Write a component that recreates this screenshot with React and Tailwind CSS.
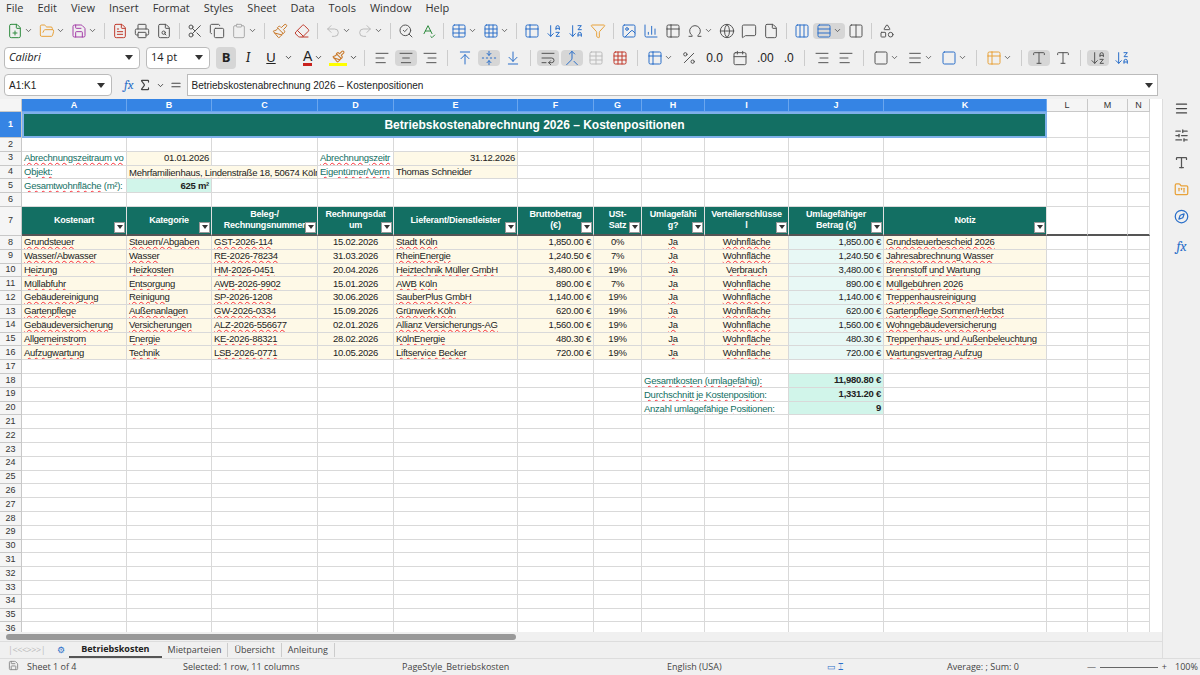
import React from "react";
import {
  FilePlus, FolderOpen, Save, FileText, Printer, FileSearch, Scissors, Copy, Clipboard, Paintbrush, Eraser,
  Undo2, Redo2, SearchCheck, SpellCheck, Table, Grid3x3, ArrowDownAZ, ArrowDownZA, Filter, Image, BarChart3,
  Table2, Omega, Globe, MessageSquare, File, Columns3, Rows3, Shapes, ChevronDown, AlignLeft, AlignCenter,
  AlignRight, ArrowUpToLine, FoldVertical, ArrowDownToLine, WrapText, Merge, Percent, Calendar, Menu,
  SlidersHorizontal, Type, FolderKanban, Compass, Sigma, Equal, Square, Columns2,
} from "lucide-react";

const F = { fontFamily: "'Open Sans','Liberation Sans',sans-serif" };
const C = { fontFamily: "'Liberation Sans',Arial,sans-serif" };
const T = "text-[9.5px] tracking-[-0.25px]";

const cols = [
  ["A", 105], ["B", 85], ["C", 106], ["D", 76], ["E", 124], ["F", 76], ["G", 48],
  ["H", 63], ["I", 84], ["J", 95], ["K", 163], ["L", 41], ["M", 40], ["N", 22],
];

const rows = [
  ["Grundsteuer", "Steuern/Abgaben", "GST-2026-114", "15.02.2026", "Stadt Köln", "1,850.00 €", "0%", "Ja", "Wohnfläche", "1,850.00 €", "Grundsteuerbescheid 2026"],
  ["Wasser/Abwasser", "Wasser", "RE-2026-78234", "31.03.2026", "RheinEnergie", "1,240.50 €", "7%", "Ja", "Wohnfläche", "1,240.50 €", "Jahresabrechnung Wasser"],
  ["Heizung", "Heizkosten", "HM-2026-0451", "20.04.2026", "Heiztechnik Müller GmbH", "3,480.00 €", "19%", "Ja", "Verbrauch", "3,480.00 €", "Brennstoff und Wartung"],
  ["Müllabfuhr", "Entsorgung", "AWB-2026-9902", "15.01.2026", "AWB Köln", "890.00 €", "7%", "Ja", "Wohnfläche", "890.00 €", "Müllgebühren 2026"],
  ["Gebäudereinigung", "Reinigung", "SP-2026-1208", "30.06.2026", "SauberPlus GmbH", "1,140.00 €", "19%", "Ja", "Wohnfläche", "1,140.00 €", "Treppenhausreinigung"],
  ["Gartenpflege", "Außenanlagen", "GW-2026-0334", "15.09.2026", "Grünwerk Köln", "620.00 €", "19%", "Ja", "Wohnfläche", "620.00 €", "Gartenpflege Sommer/Herbst"],
  ["Gebäudeversicherung", "Versicherungen", "ALZ-2026-556677", "02.01.2026", "Allianz Versicherungs-AG", "1,560.00 €", "19%", "Ja", "Wohnfläche", "1,560.00 €", "Wohngebäudeversicherung"],
  ["Allgemeinstrom", "Energie", "KE-2026-88321", "28.02.2026", "KölnEnergie", "480.30 €", "19%", "Ja", "Wohnfläche", "480.30 €", "Treppenhaus- und Außenbeleuchtung"],
  ["Aufzugwartung", "Technik", "LSB-2026-0771", "10.05.2026", "Liftservice Becker", "720.00 €", "19%", "Ja", "Wohnfläche", "720.00 €", "Wartungsvertrag Aufzug"],
];
const heads = ["Kostenart", "Kategorie", "Beleg-/\nRechnungsnummer", "Rechnungsdat\num", "Lieferant/Dienstleister", "Bruttobetrag\n(€)", "USt-\nSatz", "Umlagefähi\ng?", "Verteilerschlüsse\nl", "Umlagefähiger\nBetrag (€)", "Notiz"];
const align = ["l", "l", "l", "c", "l", "r", "c", "c", "c", "r", "l"];
const totals = [["Gesamtkosten (umlagefähig):", "11,980.80 €"], ["Durchschnitt je Kostenposition:", "1,331.20 €"], ["Anzahl umlagefähige Positionen:", "9"]];
const sq = "underline decoration-wavy decoration-red-500 decoration-[1px]";

function Cell({ w, h, className = "", children }) {
  return (
    <div style={{ width: w, height: h }} className={"shrink-0 border-r border-b border-[#d9d9d9] overflow-hidden whitespace-nowrap flex items-center px-[2px] " + className}>
      {children}
    </div>
  );
}

function Drop() {
  return <span className="absolute right-[1px] bottom-[1px] w-[11px] h-[11px] bg-white border border-[#999] flex items-center justify-center"><span className="border-x-[3px] border-x-transparent border-t-[4px] border-t-[#333]" /></span>;
}

function Row({ n, h, children, sel }) {
  return (
    <div className="flex" style={{ height: h }}>
      <div style={{ width: 22, height: h }} className={"shrink-0 flex items-center justify-center text-[9px] border-r border-b border-[#c8c8c8] " + (sel ? "bg-[#3584e4] text-white font-bold" : "bg-[#f5f5f5] text-[#333]")}>{n}</div>
      {children}
    </div>
  );
}

function Blank({ h, from = 0, to }) {
  return cols.slice(from, to).map(([k, w]) => <Cell key={k} w={w} h={h} />);
}

const I = ({ I: Ic, c = "#555", d }) => (
  <span className="flex items-center gap-[1px] px-[3px]"><Ic size={16} color={c} strokeWidth={1.5} />{d && <ChevronDown size={9} color="#444" />}</span>
);
const Sep = () => <span className="w-px h-4 bg-[#ccc] mx-1" />;

export default function App() {
  const h = 13.8;
  return (
    <div style={C} className="w-[1200px] h-[675px] overflow-hidden bg-[#f0f0f0] flex flex-col text-[#222]">
      <div style={F} className="h-[17px] flex items-center gap-[14px] px-[6px] text-[11px] text-[#333]">
        {["File", "Edit", "View", "Insert", "Format", "Styles", "Sheet", "Data", "Tools", "Window", "Help"].map((m) => <span key={m}>{m}</span>)}
      </div>
      <div className="h-[27px] flex items-center px-[4px]">
        <I I={FilePlus} c="#2e8b3e" d /><I I={FolderOpen} c="#e8a23a" d /><I I={Save} c="#a43da8" d />
        <Sep />
        <I I={FileText} c="#c0392b" /><I I={Printer} /><I I={FileSearch} />
        <Sep />
        <I I={Scissors} /><I I={Copy} /><I I={Clipboard} c="#aaa" d />
        <Sep />
        <I I={Paintbrush} c="#c97a2b" /><I I={Eraser} c="#c0392b" />
        <Sep />
        <I I={Undo2} c="#bbb" d /><I I={Redo2} c="#bbb" d />
        <Sep />
        <I I={SearchCheck} /><I I={SpellCheck} c="#2e8b3e" />
        <Sep />
        <I I={Table} c="#2a6fc9" d /><I I={Grid3x3} c="#2a6fc9" d />
        <Sep />
        <I I={Table2} c="#2a6fc9" /><I I={ArrowDownAZ} c="#2a6fc9" /><I I={ArrowDownZA} c="#2a6fc9" /><I I={Filter} c="#e8a23a" />
        <Sep />
        <I I={Image} c="#2a6fc9" /><I I={BarChart3} c="#2a6fc9" /><I I={Table2} /><I I={Omega} d /><I I={Globe} /><I I={MessageSquare} /><I I={File} />
        <Sep />
        <I I={Columns3} c="#2a6fc9" /><span className="bg-[#d6d6d6] rounded"><I I={Rows3} c="#2a6fc9" d /></span><I I={Columns2} />
        <Sep />
        <I I={Shapes} />
      </div>
      <div className="h-[27px] flex items-center px-[4px] gap-[2px]">
        <div className="flex h-[22px] w-[136px] bg-white border border-[#bbb] rounded-sm items-center">
          <span style={F} className="flex-1 px-[4px] text-[11px] italic">Calibri</span>
          <span className="w-[20px] flex justify-center"><span className="border-x-[4px] border-x-transparent border-t-[5px] border-t-[#333]" /></span>
        </div>
        <div className="flex h-[22px] w-[64px] ml-1 bg-white border border-[#bbb] rounded-sm items-center">
          <span style={F} className="flex-1 px-[4px] text-[11px]">14 pt</span>
          <span className="w-[20px] flex justify-center"><span className="border-x-[4px] border-x-transparent border-t-[5px] border-t-[#333]" /></span>
        </div>
        <span style={F} className="ml-1 w-[20px] h-[22px] bg-[#d6d6d6] rounded flex items-center justify-center font-bold text-[13px]">B</span>
        <span className="w-[20px] text-center italic text-[14px] font-serif">I</span>
        <span className="w-[22px] text-center underline text-[13px]">U</span><ChevronDown size={9} />
        <span className="ml-2 text-[14px] border-b-[3px] border-[#c9211e] leading-[14px]">A</span><ChevronDown size={9} />
        <span className="ml-1 w-[18px] h-[16px] border-b-[3px] border-[#ffff00] flex justify-center"><Paintbrush size={13} color="#c97a2b" /></span><ChevronDown size={9} />
        <Sep />
        <I I={AlignLeft} /><span className="bg-[#d6d6d6] rounded"><I I={AlignCenter} /></span><I I={AlignRight} />
        <Sep />
        <I I={ArrowUpToLine} c="#2a6fc9" /><span className="bg-[#d6d6d6] rounded"><I I={FoldVertical} c="#2a6fc9" /></span><I I={ArrowDownToLine} c="#2a6fc9" />
        <Sep />
        <span className="bg-[#d6d6d6] rounded"><I I={WrapText} /></span><span className="bg-[#d6d6d6] rounded"><I I={Merge} c="#2a6fc9" /></span><I I={Table} c="#bbb" /><I I={Grid3x3} c="#c0392b" />
        <Sep />
        <I I={Table2} c="#2a6fc9" d /><I I={Percent} /><span className="text-[12px] px-1">0.0</span><I I={Calendar} />
        <span className="text-[12px] px-1">.00</span><span className="text-[12px] px-1">.0</span>
        <Sep />
        <I I={AlignRight} /><I I={AlignLeft} />
        <Sep />
        <I I={Square} d /><I I={Menu} d /><I I={Square} c="#2a6fc9" d />
        <Sep />
        <I I={Table2} c="#e8a23a" d />
        <Sep />
        <span className="bg-[#d6d6d6] rounded"><I I={Type} /></span><I I={Type} />
        <Sep />
        <span className="bg-[#d6d6d6] rounded"><I I={ArrowDownAZ} /></span><I I={ArrowDownZA} c="#2a6fc9" />
      </div>
      <div className="h-[28px] flex items-center px-[4px] gap-[4px]">
        <div className="flex h-[22px] w-[108px] bg-white border border-[#bbb] rounded-sm items-center">
          <span className="flex-1 px-[4px] text-[10px]">A1:K1</span>
          <span className="w-[20px] flex justify-center"><span className="border-x-[4px] border-x-transparent border-t-[5px] border-t-[#333]" /></span>
        </div>
        <span className="ml-2 italic font-serif text-[13px] text-[#2a6fc9]">fx</span>
        <Sigma size={14} color="#444" /><ChevronDown size={9} /><Equal size={14} color="#444" />
        <div className="flex-1 h-[22px] bg-white border border-[#bbb] flex items-center px-[4px] text-[10px] mr-[38px] relative">
          Betriebskostenabrechnung 2026 – Kostenpositionen
          <span className="absolute right-[4px] border-x-[4px] border-x-transparent border-t-[5px] border-t-[#333]" />
        </div>
      </div>
      <div className="flex flex-1 min-h-0">
        <div className="flex flex-col w-[1162px]">
          <div className="flex-1 min-h-0 overflow-hidden bg-white">
            <div className="flex h-[13px] text-[9px] font-bold">
              <div className="w-[22px] shrink-0 bg-[#f5f5f5] border-r border-b border-[#c8c8c8]" />
              {cols.map(([k, w], i) => (
                <div key={k} style={{ width: w }} className={"shrink-0 text-center border-r border-b " + (i < 11 ? "bg-[#3584e4] text-white border-[#6aa6ee]" : "bg-[#f5f5f5] text-[#333] border-[#c8c8c8] font-normal")}>{k}</div>
              ))}
            </div>
            <Row n={1} h={26} sel>
              <div style={{ width: 1025, height: 26 }} className="shrink-0 bg-[#136f63] text-white font-bold text-[12px] flex items-center justify-center border-2 border-[#7fb0ea]">Betriebskostenabrechnung 2026 – Kostenpositionen</div>
              <Cell w={41} h={26} /><Cell w={40} h={26} /><Cell w={22} h={26} />
            </Row>
            <Row n={2} h={h}><Blank h={h} /></Row>
            <Row n={3} h={h}>
              <Cell w={105} h={h} className={"text-[#136f63] " + T}><span className={sq}>Abrechnungszeitraum vo</span></Cell>
              <Cell w={85} h={h} className={"bg-[#fef9e7] justify-end " + T}>01.01.2026</Cell>
              <Cell w={106} h={h} />
              <Cell w={76} h={h} className={"text-[#136f63] " + T}><span className={sq}>Abrechnungszeitr</span></Cell>
              <Cell w={124} h={h} className={"bg-[#fef9e7] justify-end " + T}>31.12.2026</Cell>
              <Blank h={h} from={5} />
            </Row>
            <Row n={4} h={h}>
              <Cell w={105} h={h} className={"text-[#136f63] " + T}><span className={sq}>Objekt:</span></Cell>
              <div style={{ width: 191, height: h }} className={"shrink-0 bg-[#fef9e7] px-[2px] overflow-hidden whitespace-nowrap border-b border-r border-[#d9d9d9] " + T}><span className={sq}>Mehrfamilienhaus, Lindenstraße</span> 18, 50674 Köln</div>
              <Cell w={76} h={h} className={"text-[#136f63] " + T}><span className={sq}>Eigentümer/Verm</span></Cell>
              <Cell w={124} h={h} className={"bg-[#fef9e7] " + T}>Thomas Schneider</Cell>
              <Blank h={h} from={5} />
            </Row>
            <Row n={5} h={h}>
              <Cell w={105} h={h} className={"text-[#136f63] " + T}><span className={sq}>Gesamtwohnfläche</span>&nbsp;(m²):</Cell>
              <Cell w={85} h={h} className={"bg-[#d1f5ea] font-bold justify-end " + T}>625 m²</Cell>
              <Blank h={h} from={2} />
            </Row>
            <Row n={6} h={h}><Blank h={h} /></Row>
            <Row n={7} h={29}>
              {heads.map((t, i) => (
                <div key={i} style={{ width: cols[i][1], height: 29 }} className="shrink-0 relative bg-[#136f63] text-white font-bold text-[9px] tracking-[-0.2px] leading-[11px] flex items-center justify-center text-center whitespace-pre border-r border-[#e0e0e0] border-b-2 border-b-[#555]">
                  {t}<Drop />
                </div>
              ))}
              <Cell w={41} h={29} className="border-b-2 border-b-[#555]" /><Cell w={40} h={29} className="border-b-2 border-b-[#555]" /><Cell w={22} h={29} className="border-b-2 border-b-[#555]" />
            </Row>
            {rows.map((r, ri) => (
              <Row key={ri} n={8 + ri} h={h}>
                {r.map((v, i) => (
                  <Cell key={i} w={cols[i][1]} h={h} className={T + " " + (i === 9 ? "bg-[#e8f8f5] " : "bg-[#fef9e7] ") + (align[i] === "r" ? "justify-end" : align[i] === "c" ? "justify-center" : "")}>
                    <span className={[0, 1, 2, 4, 7, 8, 10].includes(i) ? sq : ""}>{v}</span>
                  </Cell>
                ))}
                <Blank h={h} from={11} />
              </Row>
            ))}
            <Row n={17} h={h}><Blank h={h} /></Row>
            {totals.map(([l, v], i) => (
              <Row key={l} n={18 + i} h={h}>
                <Blank h={h} to={7} />
                <div style={{ width: 147, height: h }} className={"shrink-0 border-b border-r border-[#d9d9d9] px-[2px] text-[#136f63] whitespace-nowrap overflow-hidden " + T}><span className={sq}>{l}</span></div>
                <Cell w={95} h={h} className={"bg-[#d1f5ea] font-bold justify-end " + T}>{v}</Cell>
                <Blank h={h} from={10} />
              </Row>
            ))}
            {Array.from({ length: 16 }, (_, i) => <Row key={i} n={21 + i} h={h}><Blank h={h} /></Row>)}
          </div>
          <div className="h-[9px] bg-[#f0f0f0] flex items-center px-[6px]"><div className="w-[510px] h-[6px] rounded bg-[#999]" /></div>
          <div style={F} className="h-[17px] flex items-center text-[9px] text-[#444] border-t border-[#ddd]">
            <span className="text-[#bbb] px-[8px] tracking-tighter">|&lt;&lt;&lt;&gt;&gt;&gt;|</span>
            <span className="text-[#2a6fc9] px-[4px]">⚙</span>
            <span className="px-[12px] font-bold text-[#222] border-b-2 border-[#555]">Betriebskosten</span>
            <span className="px-[6px] border-r border-[#ccc]">Mietparteien</span>
            <span className="px-[6px] border-r border-[#ccc]">Übersicht</span>
            <span className="px-[6px] border-r border-[#ccc]">Anleitung</span>
          </div>
        </div>
        <div className="w-[38px] flex flex-col items-center gap-[12px] pt-[2px] bg-[#f0f0f0] border-l border-[#ddd]">
          <Menu size={15} color="#444" />
          <SlidersHorizontal size={15} color="#555" />
          <Type size={15} color="#555" />
          <FolderKanban size={15} color="#e8a23a" />
          <Compass size={15} color="#2a6fc9" />
          <span className="italic font-serif text-[14px] text-[#2a6fc9]">fx</span>
        </div>
      </div>
      <div style={F} className="h-[17px] flex items-center text-[9px] text-[#444] border-t border-[#ddd]">
        <span className="w-[183px] pl-[8px] flex gap-2"><Save size={11} color="#888" />Sheet 1 of 4</span>
        <span className="w-[219px]">Selected: 1 row, 11 columns</span>
        <span className="w-[265px]">PageStyle_Betriebskosten</span>
        <span className="w-[160px]">English (USA)</span>
        <span className="w-[120px] text-[#2a6fc9]">▭ ⌶</span>
        <span className="w-[140px]">Average: ; Sum: 0</span>
        <span className="flex items-center gap-1 w-[80px]">— <span className="flex-1 h-px bg-[#666]" /> +</span>
        <span className="ml-2">100%</span>
      </div>
    </div>
  );
}
